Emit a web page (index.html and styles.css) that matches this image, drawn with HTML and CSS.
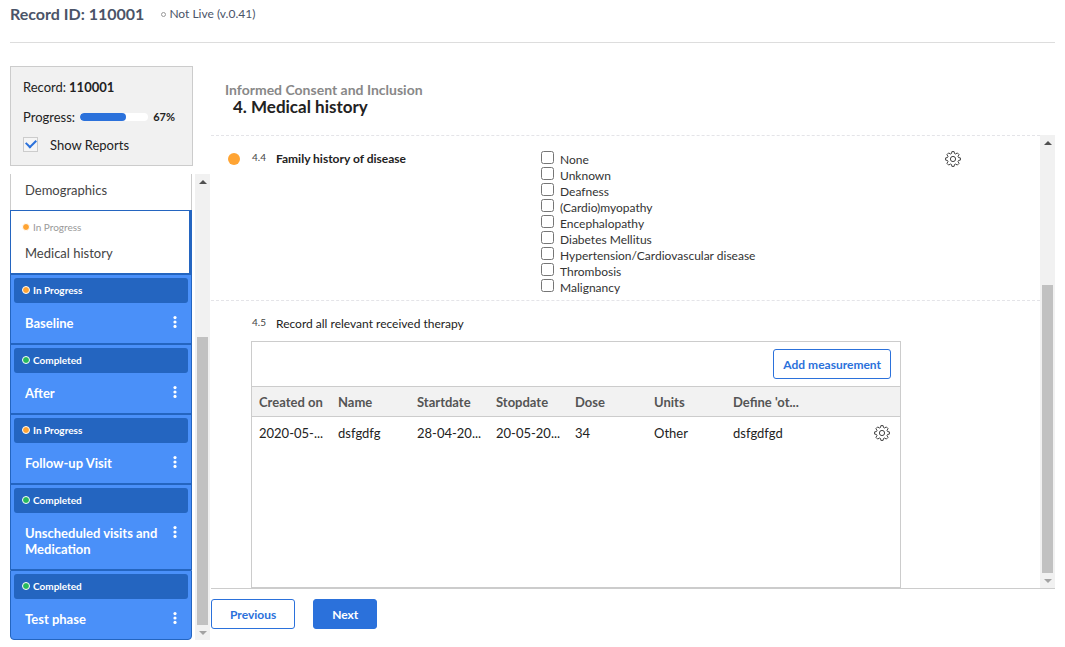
FILE: index.html
```html
<!DOCTYPE html>
<html lang="en">
<head>
<meta charset="utf-8">
<title>Record 110001</title>
<link rel="stylesheet" href="styles.css">
</head>
<body>
<svg class="sprite" aria-hidden="true">
  <symbol id="gear" viewBox="0 0 16 16">
    <path d="M6.500 2.500 6.900.6h2.200l.4 1.900 1.200.5 1.600-1.100 1.800 1.800L13 5.300l.5 1.200 1.900.4v2.200l-1.900.4-.5 1.200 1.100 1.600-1.800 1.800-1.600-1.100-1.200.5-.4 1.900H6.900l-.4-1.900-1.200-.5-1.600 1.100-1.800-1.800L3 10.700l-.5-1.200L.6 9.100V6.900l1.900-.4L3 5.300 1.900 3.700l1.800-1.800L5.300 3z"/>
    <circle cx="8" cy="8" r="2.600"/>
  </symbol>
  <symbol id="dots" viewBox="0 0 4 12">
    <circle cx="2" cy="1.600" r="1.600"/><circle cx="2" cy="6" r="1.600"/><circle cx="2" cy="10.400" r="1.600"/>
  </symbol>
</svg>
<header class="topbar">
  <h1 class="record-title">Record ID: 110001</h1>
  <span class="live-dot"></span>
  <span class="live-text">Not Live (v.0.41)</span>
</header>
<div class="layout">
  <aside class="sidebar">
    <section class="summary">
      <p class="summary-row">Record: <strong>110001</strong></p>
      <div class="summary-row progress-row">
        <span>Progress:</span>
        <span class="bar"><span class="bar-fill" style="width:67%"></span></span>
        <strong class="percent">67%</strong>
      </div>
      <label class="summary-row reports"><input class="reports-box" type="checkbox" checked>Show Reports</label>
    </section>
    <div class="nav-wrap">
      <nav class="nav">
        <a class="step step-plain" href="#">Demographics</a>
        <a class="step step-current" href="#">
          <span class="status"><i class="dot orange"></i>In Progress</span>
          <span class="step-name">Medical history</span>
        </a>
        <div class="step visit">
          <span class="status"><i class="dot orange"></i>In Progress</span>
          <div class="visit-row"><a class="step-name" href="#">Baseline</a><button class="more" aria-label="More"><svg class="dots"><use href="#dots"/></svg></button></div>
        </div>
        <div class="step visit">
          <span class="status"><i class="dot green"></i>Completed</span>
          <div class="visit-row"><a class="step-name" href="#">After</a><button class="more" aria-label="More"><svg class="dots"><use href="#dots"/></svg></button></div>
        </div>
        <div class="step visit">
          <span class="status"><i class="dot orange"></i>In Progress</span>
          <div class="visit-row"><a class="step-name" href="#">Follow-up Visit</a><button class="more" aria-label="More"><svg class="dots"><use href="#dots"/></svg></button></div>
        </div>
        <div class="step visit">
          <span class="status"><i class="dot green"></i>Completed</span>
          <div class="visit-row"><a class="step-name" href="#">Unscheduled visits and Medication</a><button class="more" aria-label="More"><svg class="dots"><use href="#dots"/></svg></button></div>
        </div>
        <div class="step visit">
          <span class="status"><i class="dot green"></i>Completed</span>
          <div class="visit-row"><a class="step-name" href="#">Test phase</a><button class="more" aria-label="More"><svg class="dots"><use href="#dots"/></svg></button></div>
        </div>
      </nav>
      <div class="scrollbar" aria-hidden="true"><i class="arrow up"></i><span class="track"><span class="thumb" style="height:66%"></span></span><i class="arrow down"></i></div>
    </div>
  </aside>
  <main class="main">
    <header class="form-head">
      <p class="phase">Informed Consent and Inclusion</p>
      <h2 class="form-title">4. Medical history</h2>
    </header>
    <div class="form-wrap">
      <div class="form">
        <section class="question">
          <i class="marker"></i>
          <span class="number">4.4</span>
          <h3 class="label required">Family history of disease</h3>
          <ul class="options">
            <li><label class="option"><input class="box" type="checkbox">None</label></li>
            <li><label class="option"><input class="box" type="checkbox">Unknown</label></li>
            <li><label class="option"><input class="box" type="checkbox">Deafness</label></li>
            <li><label class="option"><input class="box" type="checkbox">(Cardio)myopathy</label></li>
            <li><label class="option"><input class="box" type="checkbox">Encephalopathy</label></li>
            <li><label class="option"><input class="box" type="checkbox">Diabetes Mellitus</label></li>
            <li><label class="option"><input class="box" type="checkbox">Hypertension/Cardiovascular disease</label></li>
            <li><label class="option"><input class="box" type="checkbox">Thrombosis</label></li>
            <li><label class="option"><input class="box" type="checkbox">Malignancy</label></li>
          </ul>
          <button class="gear-btn" aria-label="Field settings"><svg class="gear"><use href="#gear"/></svg></button>
        </section>
        <section class="question question-table">
          <span class="number">4.5</span>
          <h3 class="label">Record all relevant received therapy</h3>
        </section>
        <div class="grid-box">
          <div class="grid-tools"><button class="btn">Add measurement</button></div>
          <table class="grid">
            <thead><tr><th>Created on</th><th>Name</th><th>Startdate</th><th>Stopdate</th><th>Dose</th><th>Units</th><th>Define 'ot...</th><th class="actions"></th></tr></thead>
            <tbody><tr><td>2020-05-...</td><td>dsfgdfg</td><td>28-04-20...</td><td>20-05-20...</td><td>34</td><td>Other</td><td>dsfgdfgd</td><td class="actions"><button class="gear-btn" aria-label="Row settings"><svg class="gear"><use href="#gear"/></svg></button></td></tr></tbody>
          </table>
        </div>
      </div>
      <div class="scrollbar" aria-hidden="true"><i class="arrow up"></i><span class="track"><span class="thumb" style="height:68%"></span></span><i class="arrow down"></i></div>
    </div>
    <footer class="actions-bar">
      <button class="btn btn-wide">Previous</button>
      <button class="btn btn-wide btn-primary">Next</button>
    </footer>
  </main>
</div>
</body>
</html>
```
FILE: styles.css
```css
* { box-sizing: border-box; }
body { margin: 0; padding: 0 10px; background: #fff; color: #222; font-family: Lato, sans-serif; font-size: 13px; line-height: 16px; }
h1, h2, h3, p, ul { margin: 0; padding: 0; }
ul { list-style: none; }
a { color: inherit; text-decoration: none; }
button { font-family: inherit; cursor: pointer; }
.sprite { display: none; }

.topbar { display: flex; align-items: center; height: 43px; padding-bottom: 14px; border-bottom: 1px solid #ddd; color: #4a5468; }
.record-title { font-size: 16px; line-height: 20px; }
.live-dot { width: 5px; height: 5px; margin: 0 3px 0 17px; border: 1px solid #999; border-radius: 50%; }
.live-text { font-size: 12px; }

.layout { display: flex; gap: 1px; padding-top: 23px; }
.sidebar { flex: none; width: 200px; }
.summary { width: 183px; height: 100px; margin-bottom: 8px; padding: 10px 12px; background: #f1f1f1; border: 1px solid #ccc; }
.summary-row { display: flex; align-items: center; gap: 3px; height: 20px; }
.summary .progress-row { gap: 5px; margin: 10px 0 8px; }
.bar { flex: 1; height: 8px; overflow: hidden; border-radius: 4px; background: #fff; }
.bar-fill { display: block; height: 8px; border-radius: 4px; background: #2b71db; }
.percent { margin-right: 5px; font-size: 11px; }
.summary .reports { gap: 12px; }
.reports-box { appearance: none; display: grid; place-items: center; width: 15px; height: 15px; margin: 0 0 2px; border: 1px solid #ccc; background: #f5f5f5; }
.reports-box:checked::before { content: ""; width: 8px; height: 5px; margin-bottom: 3px; border: solid #2b71db; border-width: 0 0 2px 2px; rotate: -45deg; }

.nav-wrap { display: flex; justify-content: space-between; }
.nav { width: 182px; }
.step { display: block; border: 1px solid #2465c0; color: #444; }
.step-plain { padding: 8px 14px 12px; border-color: #ccc; border-width: 0 1px; }
.step-current { padding: 3px 3px 12px; border-right-width: 3px; }
.status { display: flex; align-items: center; gap: 3px; height: 25px; padding-left: 8px; border-radius: 3px; font-size: 10px; }
.dot { width: 8px; height: 8px; border: 1px solid #fff; border-radius: 50%; }
.orange { background: #ffa433; }
.green { background: #27ba5c; }
.step-current .status { color: #999; }
.step-current .step-name { display: block; margin: 6px 0 0 11px; }
.visit { padding: 3px; background: #4a90f9; color: #fff; font-weight: 700; }
.visit:last-child { border-radius: 0 0 4px 4px; }
.visit .status { padding-bottom: 2px; background: #2465c0; }
.visit-row { display: flex; align-items: flex-start; justify-content: space-between; padding: 12px 7px 9px 11px; }
.visit .step-name { max-width: 136px; }
.more { display: grid; place-items: center; width: 12px; height: 14px; padding: 0; border: 0; background: none; }
.dots { width: 4px; height: 12px; fill: #fff; }

.scrollbar { display: flex; flex-direction: column; flex: none; width: 15px; background: #f1f1f1; }
.arrow { display: grid; place-items: center; height: 15px; }
.arrow::before { content: ""; border: solid transparent; border-width: 0 4px; }
.up::before { border-bottom: 4px solid #505050; }
.down::before { border-top: 4px solid #a3a3a3; }
.track { display: flex; flex: 1; flex-direction: column; justify-content: flex-end; padding: 0 2px; }
.thumb { background: #c1c1c1; }

.main { display: flex; flex: 1; flex-direction: column; min-width: 0; }
.form-head { height: 69px; padding: 15px 14px 0; }
.phase { font-size: 14px; line-height: 18px; color: #888; font-weight: 700; }
.form-title { padding-left: 8px; font-size: 17px; line-height: 16px; }
.form-wrap { display: flex; flex: 1; border-bottom: 1px solid #ccc; }
.form { display: flex; flex: 1; flex-direction: column; min-width: 0; }
.question { display: grid; grid-template-columns: 24px 24px 265px 1fr 16px; padding: 15px 79px 5px 17px; border: dashed #e4e4e8; border-width: 1px 0; }
.marker { width: 12px; height: 12px; margin-top: 2px; border-radius: 50%; background: #ffa433; }
.number { font-size: 10px; line-height: 13px; color: #444; }
.label { font-size: 12px; font-weight: 400; }
.required { font-weight: 700; }
.option { display: flex; align-items: flex-start; gap: 6px; height: 16px; font-size: 12px; line-height: 18px; color: #333; }
.box { flex: none; width: 13px; height: 13px; margin: 0; }
.gear-btn { display: block; width: 16px; height: 16px; padding: 0; border: 0; background: none; }
.gear { display: block; width: 16px; height: 16px; fill: none; stroke: #444; stroke-width: 1; stroke-linejoin: round; }
.question-table { padding: 15px 0 9px 41px; grid-template-columns: 24px 1fr; border: 0; }

.grid-box { flex: 1; max-width: 650px; margin-left: 40px; border: 1px solid #ccc; }
.grid-tools { display: flex; justify-content: flex-end; padding: 7px 9px; }
.btn { height: 30px; padding: 0 9px; border: 1px solid #2b71db; border-radius: 3px; background: #fff; color: #2b71db; font-size: 12px; font-weight: 700; }
.grid { width: 100%; table-layout: fixed; border-collapse: collapse; }
.grid th, .grid td { width: 79px; height: 33px; padding: 0 0 0 7px; overflow: hidden; text-align: left; white-space: nowrap; color: #222; }
.grid th { height: 30px; border: solid #ccc; border-width: 1px 0; background: #f2f2f2; color: #555; }
.grid .actions { width: auto; padding: 0 10px 0 0; }
.actions .gear-btn { margin-left: auto; }

.actions-bar { display: flex; gap: 18px; padding: 10px 0 11px; }
.btn-wide { padding: 0 18px; }
.btn-primary { background: #2b71db; color: #fff; }
```
